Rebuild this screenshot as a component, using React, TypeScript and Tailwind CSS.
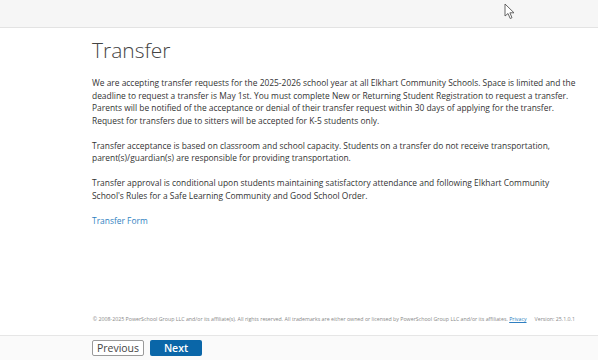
export default function App() {
  return (
    <div
      className="relative flex h-[360px] w-[598px] flex-col overflow-hidden bg-white text-[#333]"
      style={{ fontFamily: '"Open Sans", "Liberation Sans", sans-serif' }}
    >
      {/* Top bar */}
      <div className="h-[28px] shrink-0 border-b border-[#e3e3e3] bg-[#f6f6f6]" />

      {/* Content */}
      <main className="flex-1 pl-[92px] pr-[16px]">
        <h1 className="mt-[7px] text-[21px] font-light leading-[30px] text-[#444]">Transfer</h1>

        <div className="mt-[12px] space-y-[12.5px] text-[8.42px] leading-[12.5px]">
          <p>
            We are accepting transfer requests for the 2025-2026 school year at all Elkhart Community Schools. Space is
            limited and the deadline to request a transfer is May 1st. You must complete New or Returning Student
            Registration to request a transfer. Parents will be notified of the acceptance or denial of their transfer
            request within 30 days of applying for the transfer. Request for transfers due to sitters will be accepted
            for K-5 students only.
          </p>
          <p>
            Transfer acceptance is based on classroom and school capacity. Students on a transfer do not receive
            transportation, parent(s)/guardian(s) are responsible for providing transportation.
          </p>
          <p>
            Transfer approval is conditional upon students maintaining satisfactory attendance and following Elkhart
            Community School's Rules for a Safe Learning Community and Good School Order.
          </p>
          <p>
            <a href="#" className="text-[#2f7fc1]">
              Transfer Form
            </a>
          </p>
        </div>
      </main>

      {/* Copyright */}
      <div className="flex justify-end gap-[8px] pb-[12px] pr-[23px] text-[5.28px] leading-[8px] text-[#888]">
        <span>
          © 2008-2025 PowerSchool Group LLC and/or its affiliate(s). All rights reserved. All trademarks are either
          owned or licensed by PowerSchool Group LLC and/or its affiliates.{" "}
          <a href="#" className="text-[#2f7fc1] underline">
            Privacy
          </a>
        </span>
        <span>Version: 25.1.0.1</span>
      </div>

      {/* Footer buttons */}
      <div className="flex h-[25px] shrink-0 items-start gap-[6px] border-t border-[#e6e6e6] bg-[#fafafa] pl-[92px] pt-[4px]">
        <button className="h-[16px] w-[52px] rounded-[2px] border border-[#9a9a9a] bg-white text-[10.5px] leading-[14px] text-[#444]">
          Previous
        </button>
        <button className="h-[16px] w-[52px] rounded-[2px] bg-[#0a66a8] text-[10.5px] font-semibold leading-[16px] text-white">
          Next
        </button>
      </div>

      {/* Mouse cursor */}
      <svg className="absolute left-[504px] top-[3px]" width="12" height="17" viewBox="0 0 12 17">
        <path
          d="M1 1 L1 13 L4 10.5 L6.2 15.5 L8 14.7 L5.9 9.8 L10 9.8 Z"
          fill="#fff"
          stroke="#555"
          strokeWidth="0.9"
          strokeLinejoin="round"
        />
      </svg>
    </div>
  )
}
